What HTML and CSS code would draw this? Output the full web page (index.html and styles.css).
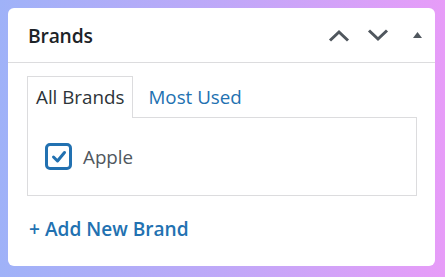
FILE: index.html
```html
<!DOCTYPE html>
<html>
<head>
<meta charset="utf-8">
<link rel="stylesheet" href="styles.css">
</head>
<body>
<div class="postbox">
  <div class="postbox-header">
    <h2 class="title">Brands</h2>
    <div class="actions">
      <button class="act up" aria-label="Move up">
        <svg width="22" height="13" viewBox="0 0 22 13"><path d="M2 11.5 L11 3 L20 11.5" fill="none" stroke="#50575e" stroke-width="3"/></svg>
      </button>
      <button class="act down" aria-label="Move down">
        <svg width="22" height="13" viewBox="0 0 22 13"><path d="M2 1.5 L11 10 L20 1.5" fill="none" stroke="#50575e" stroke-width="3"/></svg>
      </button>
      <button class="act toggle" aria-label="Toggle panel">
        <svg width="9" height="6" viewBox="0 0 9 6"><path d="M4.5 0 L9 6 L0 6 Z" fill="#50575e"/></svg>
      </button>
    </div>
  </div>
  <div class="inside">
    <ul class="tabs">
      <li class="tab active">All Brands</li>
      <li class="tab">Most Used</li>
    </ul>
    <div class="panel">
      <label class="item">
        <span class="check">
          <svg width="18" height="18" viewBox="0 0 18 18"><path d="M3.5 9 L7.5 13 L14.5 4.5" fill="none" stroke="#2271b1" stroke-width="3" stroke-linecap="round" stroke-linejoin="round"/></svg>
        </span>
        <span class="label">Apple</span>
      </label>
    </div>
    <a class="add" href="#">+ Add New Brand</a>
  </div>
</div>
</body>
</html>
```

FILE: styles.css
```css
html, body {
  margin: 0;
  height: 100%;
}
body {
  box-sizing: border-box;
  padding: 8px 10px 11px 8px;
  background: linear-gradient(90deg, #9fb2f8 0%, #bfa8f8 50%, #e79cf8 100%);
  font-family: "Open Sans", "Noto Sans", sans-serif;
}
.postbox {
  background: #fff;
  border-radius: 6px;
  height: 100%;
  display: flex;
  flex-direction: column;
  overflow: hidden;
}
.postbox-header {
  height: 54px;
  flex: none;
  border-bottom: 1px solid #dcdcde;
  display: flex;
  align-items: center;
  justify-content: space-between;
  padding: 0 0 0 20px;
}
.title {
  margin: 0;
  font-size: 19.3px;
  font-weight: 600;
  color: #1d2327;
  letter-spacing: -0.2px;
}
.actions {
  display: flex;
  align-items: center;
  margin-right: 13px;
}
.act {
  border: 0;
  background: none;
  padding: 0;
  display: flex;
  align-items: center;
  justify-content: center;
  height: 30px;
}
.act.up { width: 22px; margin-right: 17px; }
.act.down { width: 22px; margin-right: 24px; }
.act.toggle { width: 9px; }
.inside {
  padding: 13px 18px 0 19px;
}
.tabs {
  list-style: none;
  margin: 0;
  padding: 0;
  display: flex;
  font-size: 18.8px;
}
.tab {
  padding: 0 8px;
  line-height: 40px;
  height: 40px;
  color: #2271b1;
  border: 1px solid transparent;
  border-bottom: 0;
  margin-right: 6px;
}
.tab.active {
  color: #2c3338;
  border-color: #dcdcde;
  background: #fff;
  position: relative;
  z-index: 1;
  margin-bottom: -1px;
  height: 41px;
}
.panel {
  border: 1px solid #dcdcde;
  height: 77px;
  display: flex;
  align-items: center;
  padding-left: 17px;
}
.item {
  display: flex;
  align-items: center;
}
.check {
  box-sizing: border-box;
  width: 27px;
  height: 27px;
  border: 3px solid #2271b1;
  border-radius: 5px;
  display: flex;
  align-items: center;
  justify-content: center;
}
.label {
  margin-left: 11px;
  font-size: 18.8px;
  color: #50575e;
}
.add {
  display: inline-block;
  margin-top: 20px;
  margin-left: 2px;
  font-size: 19.1px;
  font-weight: 600;
  color: #2271b1;
  text-decoration: none;
}
```
